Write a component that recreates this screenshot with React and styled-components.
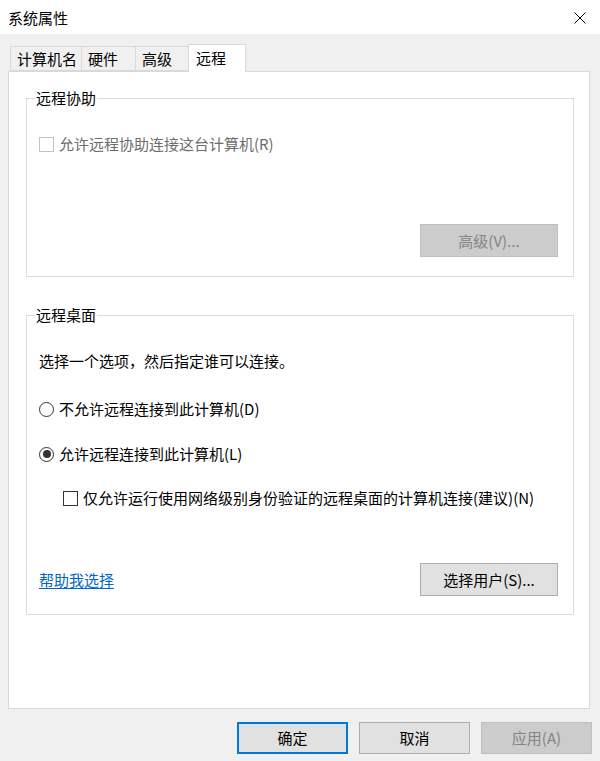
import React from "react";
import styled, { createGlobalStyle } from "styled-components";

const GlobalStyle = createGlobalStyle`
  html, body {
    margin: 0;
    padding: 0;
    background: #f0f0f0;
  }
  body {
    font-family: "Noto Sans CJK SC", "Noto Sans", sans-serif;
    font-size: 15px;
    color: #000;
  }
`;

const Window = styled.div`
  width: 600px;
  height: 761px;
  display: flex;
  flex-direction: column;
  background: #f0f0f0;
  overflow: hidden;
`;

const TitleBar = styled.div`
  height: 34px;
  flex: none;
  background: #fff;
  display: flex;
  align-items: center;
  justify-content: space-between;
  padding: 0 14px 0 8px;
`;

const Title = styled.div`
  font-size: 15px;
  line-height: 20px;
  margin-top: 2px;
`;

const Close = styled.svg`
  display: block;
  margin-top: 1px;
`;

const Body = styled.div`
  flex: none;
  display: flex;
  flex-direction: column;
  padding: 10px 10px 0 8px;
`;

const Tabs = styled.div`
  display: flex;
  align-items: flex-end;
  height: 27px;
  padding-left: 2px;
  position: relative;
  z-index: 1;
`;

const Tab = styled.div`
  box-sizing: border-box;
  width: ${(p) => p.$w}px;
  height: ${(p) => (p.$active ? 28 : 25)}px;
  margin-bottom: ${(p) => (p.$active ? -1 : 0)}px;
  margin-left: -1px;
  padding-left: ${(p) => (p.$active ? 7 : 6)}px;
  border: 1px solid #d9d9d9;
  border-bottom: ${(p) => (p.$active ? "none" : "1px solid #d9d9d9")};
  background: ${(p) => (p.$active ? "#fff" : "#f0f0f0")};
  display: flex;
  align-items: center;
  font-size: 15px;
  line-height: 20px;
  padding-bottom: ${(p) => (p.$active ? 2 : 0)}px;
  &:first-child {
    margin-left: 0;
  }
`;

const Panel = styled.div`
  box-sizing: border-box;
  height: 638px;
  background: #fff;
  border: 1px solid #d9d9d9;
  padding: 16px 15px 0 17px;
`;

const Group = styled.fieldset`
  box-sizing: border-box;
  margin: ${(p) => p.$top || 0}px 0 0 0;
  padding: ${(p) => p.$pad};
  border: 1px solid #dcdcdc;
  min-width: 0;
`;

const Legend = styled.legend`
  font-size: 15px;
  line-height: 20px;
  padding: 0 1px;
  margin-left: -4px;
`;

const Row = styled.div`
  display: flex;
  align-items: center;
  height: 20px;
  line-height: 20px;
  margin-top: ${(p) => p.$mt || 0}px;
  padding-left: ${(p) => p.$indent || 0}px;
  color: ${(p) => (p.$disabled ? "#6d6d6d" : "#000")};
  white-space: nowrap;
`;

const Box = styled.span`
  box-sizing: border-box;
  flex: none;
  width: 15px;
  height: 15px;
  border: 1px solid ${(p) => (p.$disabled ? "#c3c3c3" : "#333")};
  background: #fff;
  margin-right: 5px;
`;

const Radio = styled.span`
  box-sizing: border-box;
  flex: none;
  width: 15px;
  height: 15px;
  border-radius: 50%;
  border: 1px solid #333;
  margin-right: 5px;
  display: flex;
  align-items: center;
  justify-content: center;
  &::after {
    content: "";
    width: 8px;
    height: 8px;
    border-radius: 50%;
    background: ${(p) => (p.$checked ? "#333" : "transparent")};
  }
`;

const ActionRow = styled.div`
  display: flex;
  align-items: center;
  justify-content: ${(p) => (p.$split ? "space-between" : "flex-end")};
  margin-top: ${(p) => p.$mt || 0}px;
`;

const Button = styled.button`
  box-sizing: border-box;
  width: ${(p) => p.$w || 138}px;
  height: ${(p) => p.$h || 33}px;
  font-family: inherit;
  font-size: 15px;
  line-height: 20px;
  padding: 0;
  margin: 0;
  border-radius: 0;
  color: ${(p) => (p.disabled ? "#838383" : "#000")};
  background: ${(p) => (p.disabled ? "#cccccc" : "#e1e1e1")};
  border: ${(p) =>
    p.$primary ? "2px solid #0078d7" : p.disabled ? "1px solid #bfbfbf" : "1px solid #adadad"};
`;

const Link = styled.a`
  color: #0066cc;
  text-decoration: underline;
  text-underline-offset: 2px;
  font-size: 15px;
  line-height: 20px;
  cursor: pointer;
`;

const Footer = styled.div`
  display: flex;
  justify-content: flex-end;
  gap: 11px;
  padding: 13px 8px 0 0;
`;

export default function App() {
  return (
    <>
      <GlobalStyle />
      <Window>
        <TitleBar>
          <Title>系统属性</Title>
          <Close width="12" height="12" viewBox="0 0 12 12">
            <path d="M0.5 0.5 L11.5 11.5 M11.5 0.5 L0.5 11.5" stroke="#000" strokeWidth="1" fill="none" />
          </Close>
        </TitleBar>
        <Body>
          <Tabs>
            <Tab $w={72}>计算机名</Tab>
            <Tab $w={55}>硬件</Tab>
            <Tab $w={54}>高级</Tab>
            <Tab $w={58} $active>远程</Tab>
          </Tabs>
          <Panel>
            <Group $pad="26px 15px 19px 12px">
              <Legend>远程协助</Legend>
              <Row $disabled>
                <Box $disabled />
                允许远程协助连接这台计算机(R)
              </Row>
              <ActionRow $mt={70}>
                <Button disabled>高级(V)...</Button>
              </ActionRow>
            </Group>
            <Group $top={28} $pad="26px 15px 18px 12px">
              <Legend>远程桌面</Legend>
              <Row>选择一个选项，然后指定谁可以连接。</Row>
              <Row $mt={28}>
                <Radio />
                不允许远程连接到此计算机(D)
              </Row>
              <Row $mt={25}>
                <Radio $checked />
                允许远程连接到此计算机(L)
              </Row>
              <Row $mt={24} $indent={24}>
                <Box />
                仅允许运行使用网络级别身份验证的远程桌面的计算机连接(建议)(N)
              </Row>
              <ActionRow $split $mt={55}>
                <Link>帮助我选择</Link>
                <Button>选择用户(S)...</Button>
              </ActionRow>
            </Group>
          </Panel>
        </Body>
        <Footer>
          <Button $w={111} $h={32} $primary>确定</Button>
          <Button $w={111} $h={32}>取消</Button>
          <Button $w={111} $h={32} disabled>应用(A)</Button>
        </Footer>
      </Window>
    </>
  );
}
